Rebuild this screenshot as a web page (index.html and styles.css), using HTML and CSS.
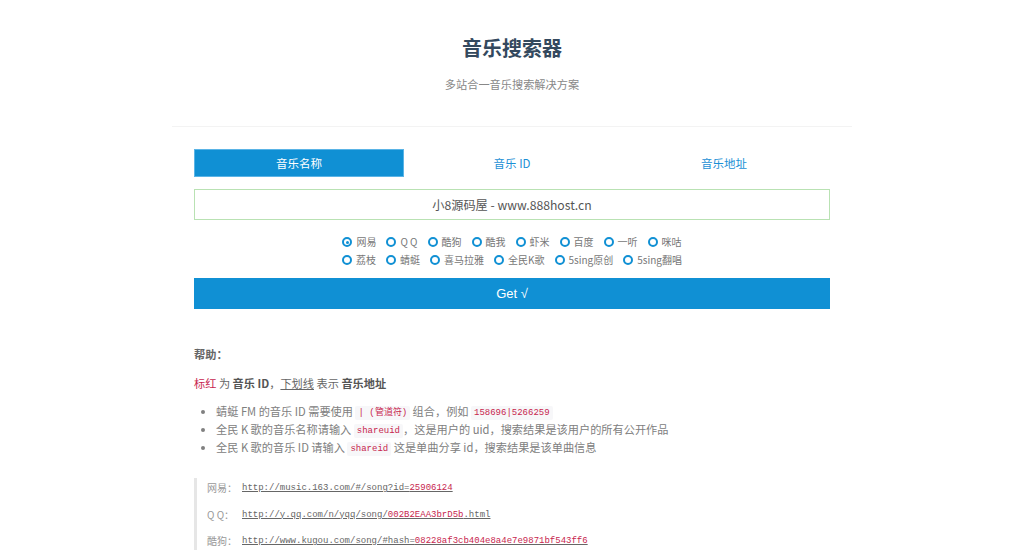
FILE: index.html
```html
<!DOCTYPE html>
<html lang="zh-CN">
<head>
<meta charset="utf-8">
<title>音乐搜索器</title>
<link rel="stylesheet" href="styles.css">
</head>
<body>
<div class="page">
  <header class="header">
    <h1 class="title">音乐搜索器</h1>
    <p class="subtitle">多站合一音乐搜索解决方案</p>
  </header>
  <main class="main">
    <nav class="tabs">
      <span class="tab active">音乐名称</span>
      <span class="tab">音乐 ID</span>
      <span class="tab">音乐地址</span>
    </nav>
    <div class="input">小8源码屋 - www.888host.cn</div>
    <div class="radios">
      <div class="radio-row">
        <label class="radio"><span class="dot checked"></span>网易</label>
        <label class="radio"><span class="dot"></span>Q Q</label>
        <label class="radio"><span class="dot"></span>酷狗</label>
        <label class="radio"><span class="dot"></span>酷我</label>
        <label class="radio"><span class="dot"></span>虾米</label>
        <label class="radio"><span class="dot"></span>百度</label>
        <label class="radio"><span class="dot"></span>一听</label>
        <label class="radio"><span class="dot"></span>咪咕</label>
      </div>
      <div class="radio-row">
        <label class="radio"><span class="dot"></span>荔枝</label>
        <label class="radio"><span class="dot"></span>蜻蜓</label>
        <label class="radio"><span class="dot"></span>喜马拉雅</label>
        <label class="radio"><span class="dot"></span>全民K歌</label>
        <label class="radio"><span class="dot"></span>5sing原创</label>
        <label class="radio"><span class="dot"></span>5sing翻唱</label>
      </div>
    </div>
    <button class="btn">Get √</button>
    <section class="help">
      <p class="help-title">帮助：</p>
      <p class="help-line"><span class="red">标红</span> 为 <b>音乐 ID</b>，<u>下划线</u> 表示 <b>音乐地址</b></p>
      <ul class="help-list">
        <li>蜻蜓 FM 的音乐 ID 需要使用 <code>| (管道符)</code> 组合，例如 <code>158696|5266259</code></li>
        <li>全民 K 歌的音乐名称请输入 <code>shareuid</code>，这是用户的 uid，搜索结果是该用户的所有公开作品</li>
        <li>全民 K 歌的音乐 ID 请输入 <code>shareid</code> 这是单曲分享 id，搜索结果是该单曲信息</li>
      </ul>
      <blockquote class="examples">
        <p><span class="site">网易：</span><span class="url">http://music.163.com/#/song?id=<span class="red">25906124</span></span></p>
        <p><span class="site">Q Q：</span><span class="url">http://y.qq.com/n/yqq/song/<span class="red">002B2EAA3brD5b</span>.html</span></p>
        <p><span class="site">酷狗：</span><span class="url">http://www.kugou.com/song/#hash=<span class="red">08228af3cb404e8a4e7e9871bf543ff6</span></span></p>
      </blockquote>
    </section>
  </main>
</div>
</body>
</html>
```

FILE: styles.css
```css
* { box-sizing: border-box; }
html, body { margin: 0; padding: 0; background: #fff; }
body {
  font-family: "Noto Sans CJK SC", "Noto Sans", sans-serif;
  color: #666;
  font-size: 11.2px;
}
.page { width: 680px; margin: 0 auto; }
.header {
  padding-top: 33px;
  border-bottom: 1px solid #f3f3f3;
  padding-bottom: 33px;
  text-align: center;
}
.title {
  margin: 0;
  font-size: 20px;
  line-height: 30px;
  font-weight: 700;
  color: #34495e;
}
.subtitle {
  margin: 12px 0 0;
  font-size: 11.2px;
  line-height: 18px;
  color: #888;
}
.main { padding: 22px 22px 0; }
.tabs { display: flex; height: 28px; }
.tab {
  flex: 1;
  display: flex;
  align-items: center;
  justify-content: center;
  font-size: 11.5px;
  color: #1a8fd5;
}
.tab.active {
  background: #1090d4;
  color: #fff;
  border: 1px solid #5ab4e6;
  flex: 0 0 210px;
  margin-right: 2px;
}
.input {
  margin-top: 12px;
  height: 31px;
  border: 1px solid #b9e2b3;
  display: flex;
  align-items: center;
  justify-content: center;
  font-size: 12.2px;
  color: #555;
}
.radios { margin-top: 13px; }
.radio-row {
  display: flex;
  justify-content: center;
  gap: 10px;
  height: 18px;
  align-items: center;
}
.radio {
  display: flex;
  align-items: center;
  gap: 4px;
  font-size: 10px;
  color: #777;
  line-height: 18px;
}
.dot {
  width: 10px;
  height: 10px;
  border: 2px solid #1090d4;
  border-radius: 50%;
  display: inline-flex;
  align-items: center;
  justify-content: center;
}
.dot.checked::after {
  content: "";
  width: 3px;
  height: 3px;
  border-radius: 50%;
  background: #1090d4;
}
.btn {
  display: block;
  width: 100%;
  margin-top: 9px;
  height: 31px;
  border: 0;
  background: #1090d4;
  color: #fff;
  font-family: "Liberation Sans", "Noto Sans", sans-serif;
  font-size: 13px;
  padding: 0;
}
.help { margin-top: 36px; }
.help p { margin: 0; }
.help-title {
  font-weight: 700;
  line-height: 18px;
  color: #666;
}
.help-line {
  margin-top: 11px !important;
  line-height: 18px;
  color: #666;
}
.help-line b { color: #555; }
.red { color: #c7254e; }
.help-list {
  margin: 10px 0 0;
  padding-left: 22px;
  line-height: 18px;
  color: #808080;
}
.help-list li { height: 18px; }
code {
  font-family: "Liberation Mono", "DejaVu Sans Mono", monospace;
  font-size: 9px;
  line-height: 1;
  vertical-align: 1px;
  color: #c7254e;
  background: #f7f7f9;
  padding: 2px 3px;
  border-radius: 2px;
}
.examples {
  margin: 22px 0 0;
  border-left: 3px solid #e6e6e6;
  padding: 1px 0 0 10px;
}
.examples p {
  line-height: 18px;
  height: 18px;
  margin-bottom: 8.5px !important;
  display: flex;
  align-items: center;
}
.site {
  font-size: 10px;
  color: #999;
  width: 35px;
}
.url {
  font-family: "Liberation Mono", "DejaVu Sans Mono", monospace;
  font-size: 9px;
  color: #666;
  text-decoration: underline;
}
```
